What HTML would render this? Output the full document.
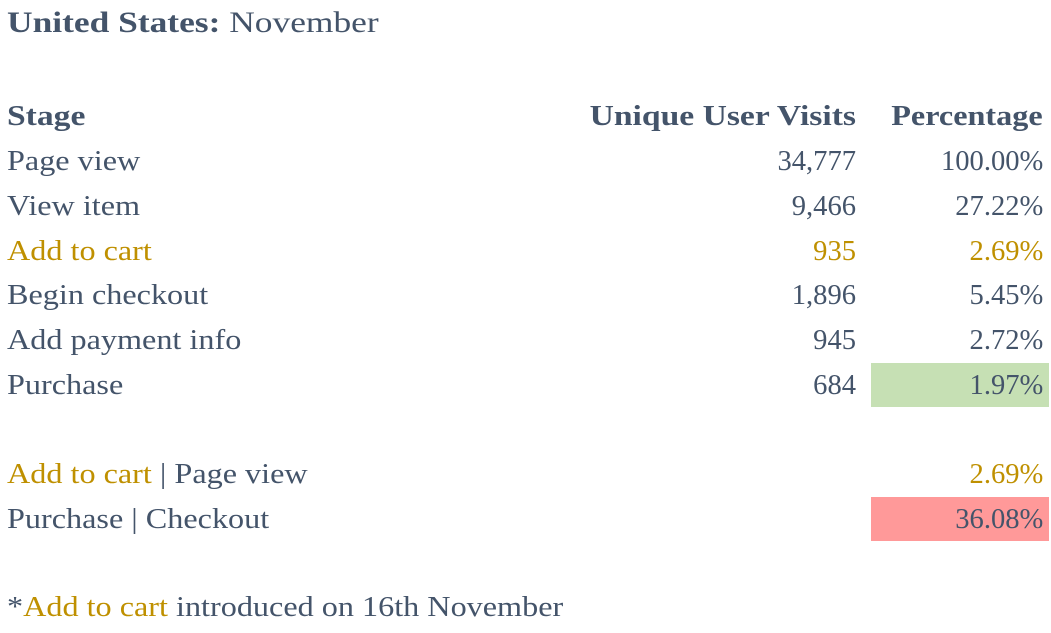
<!DOCTYPE html>
<html><head><meta charset="utf-8"><style>
body{margin:0;width:1051px;height:633px;background:#fff;position:relative;overflow:hidden;font-family:"Liberation Serif",serif;color:#44546a;}
.r{position:absolute;left:0;width:1051px;height:45px;line-height:45px;font-size:28px;}
.a{position:absolute;left:7px;transform:scaleX(1.15);transform-origin:left center;white-space:nowrap;}
.b{position:absolute;right:195px;transform:scaleX(1.02);transform-origin:right center;white-space:nowrap;}
.c{position:absolute;right:8px;transform:scaleX(1.02);transform-origin:right center;white-space:nowrap;}
.h .a{transform:scaleX(1.2);}
.h .b{transform:scaleX(1.2);}
.h .c{transform:scaleX(1.15);}
.g{color:#bf9000;}
.h{font-weight:bold;}
.box{position:absolute;left:871px;width:178px;height:44px;}
</style></head><body>
<div style="position:absolute;left:7px;top:3px;font-size:30px;line-height:40px;transform:scaleX(1.18);transform-origin:left center;white-space:nowrap;"><b>United States:</b> November</div>
<div class="box" style="top:363px;background:#c6e0b4"></div>
<div class="box" style="top:497px;background:#ff9999"></div>
<div class="r h" style="top:94px"><span class="a">Stage</span><span class="b">Unique User Visits</span><span class="c">Percentage</span></div>
<div class="r" style="top:139px"><span class="a">Page view</span><span class="b">34,777</span><span class="c">100.00%</span></div>
<div class="r" style="top:184px"><span class="a">View item</span><span class="b">9,466</span><span class="c">27.22%</span></div>
<div class="r g" style="top:229px"><span class="a">Add to cart</span><span class="b">935</span><span class="c">2.69%</span></div>
<div class="r" style="top:273px"><span class="a">Begin checkout</span><span class="b">1,896</span><span class="c">5.45%</span></div>
<div class="r" style="top:318px"><span class="a">Add payment info</span><span class="b">945</span><span class="c">2.72%</span></div>
<div class="r" style="top:363px"><span class="a">Purchase</span><span class="b">684</span><span class="c">1.97%</span></div>
<div class="r" style="top:452px"><span class="a"><span class="g">Add to cart</span> | Page view</span><span class="c g">2.69%</span></div>
<div class="r" style="top:497px"><span class="a">Purchase | Checkout</span><span class="c">36.08%</span></div>
<div class="r" style="top:585px"><span class="a">*<span class="g">Add to cart</span> introduced on 16th November</span></div>
</body></html>
